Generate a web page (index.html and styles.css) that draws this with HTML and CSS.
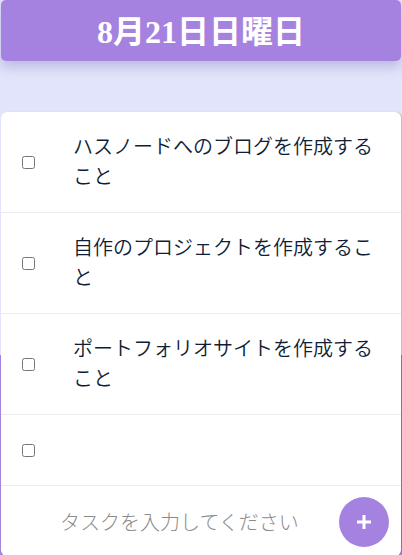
FILE: index.html
```html
<!DOCTYPE html>
<html lang="ja">
<head>
<meta charset="utf-8">
<title>Todo</title>
<link rel="stylesheet" href="styles.css">
</head>
<body>
<div class="page">
  <header class="header">
    <h1 class="title">8月21日日曜日</h1>
  </header>
  <main class="card">
    <ul class="list">
      <li class="row">
        <span class="check"><input type="checkbox"></span>
        <span class="text">ハスノードへのブログを作成すること</span>
      </li>
      <li class="row">
        <span class="check"><input type="checkbox"></span>
        <span class="text">自作のプロジェクトを作成すること</span>
      </li>
      <li class="row">
        <span class="check"><input type="checkbox"></span>
        <span class="text">ポートフォリオサイトを作成すること</span>
      </li>
      <li class="row">
        <span class="check"><input type="checkbox"></span>
        <span class="text"></span>
      </li>
    </ul>
    <form class="add">
      <input class="task-input" type="text" placeholder="タスクを入力してください">
      <button class="add-btn" type="button" aria-label="追加">
        <svg width="18" height="18" viewBox="0 0 18 18"><path d="M9 2v14M2 9h14" stroke="#fff" stroke-width="3" stroke-linecap="butt"/></svg>
      </button>
    </form>
  </main>
</div>
</body>
</html>
```
FILE: styles.css
```css
html, body {
  margin: 0;
  padding: 0;
}
body {
  background: linear-gradient(#e1e4fa 0, #e1e4fa 355px, #a583df 355px);
  min-height: 555px;
  font-family: "Noto Sans CJK JP", "Noto Sans", sans-serif;
  overflow: hidden;
}
.page {
  padding: 0 1px;
}
.header {
  height: 61px;
  background: #a682e0;
  border-radius: 5px;
  box-shadow: 0 6px 12px rgba(120, 110, 180, 0.35);
  display: flex;
  align-items: center;
  justify-content: center;
}
.title {
  margin: 0;
  color: #fff;
  font-family: "Liberation Serif", "Noto Sans CJK JP", serif;
  font-weight: bold;
  font-size: 32px;
  line-height: 1;
  padding-top: 2px;
}
.card {
  margin-top: 51px;
  background: #fff;
  border-radius: 6px;
  box-shadow: 1px 0 1px rgba(0, 0, 0, 0.18);
  overflow: hidden;
}
.list {
  list-style: none;
  margin: 0;
  padding: 0;
}
.row {
  display: flex;
  align-items: center;
  padding: 19px 22px 21px 0;
  border-bottom: 1px solid #ececf0;
  min-height: 30px;
}
.check {
  width: 72px;
  flex: none;
  display: flex;
  align-items: center;
  padding-top: 2px;
}
.check input {
  margin: 0 0 0 21px;
  width: 13px;
  height: 13px;
}
.text {
  flex: 1;
  font-size: 20px;
  font-weight: 350;
  line-height: 30px;
  color: #0f1e36;
  word-break: break-all;
}
.add {
  display: flex;
  align-items: center;
  height: 70px;
  padding: 0 12px 0 59px;
  margin: 0;
}
.task-input {
  flex: 1;
  border: none;
  outline: none;
  background: transparent;
  font-family: "Noto Sans CJK JP", sans-serif;
  font-weight: 300;
  font-size: 20px;
  color: #333;
  padding: 0;
  min-width: 0;
}
.task-input::placeholder {
  color: #8a8a8a;
}
.add-btn {
  width: 50px;
  height: 50px;
  border-radius: 50%;
  border: none;
  background: #a682e0;
  display: flex;
  align-items: center;
  justify-content: center;
  padding: 0;
  margin-top: 1px;
}
.add-btn svg {
  display: block;
}
```
